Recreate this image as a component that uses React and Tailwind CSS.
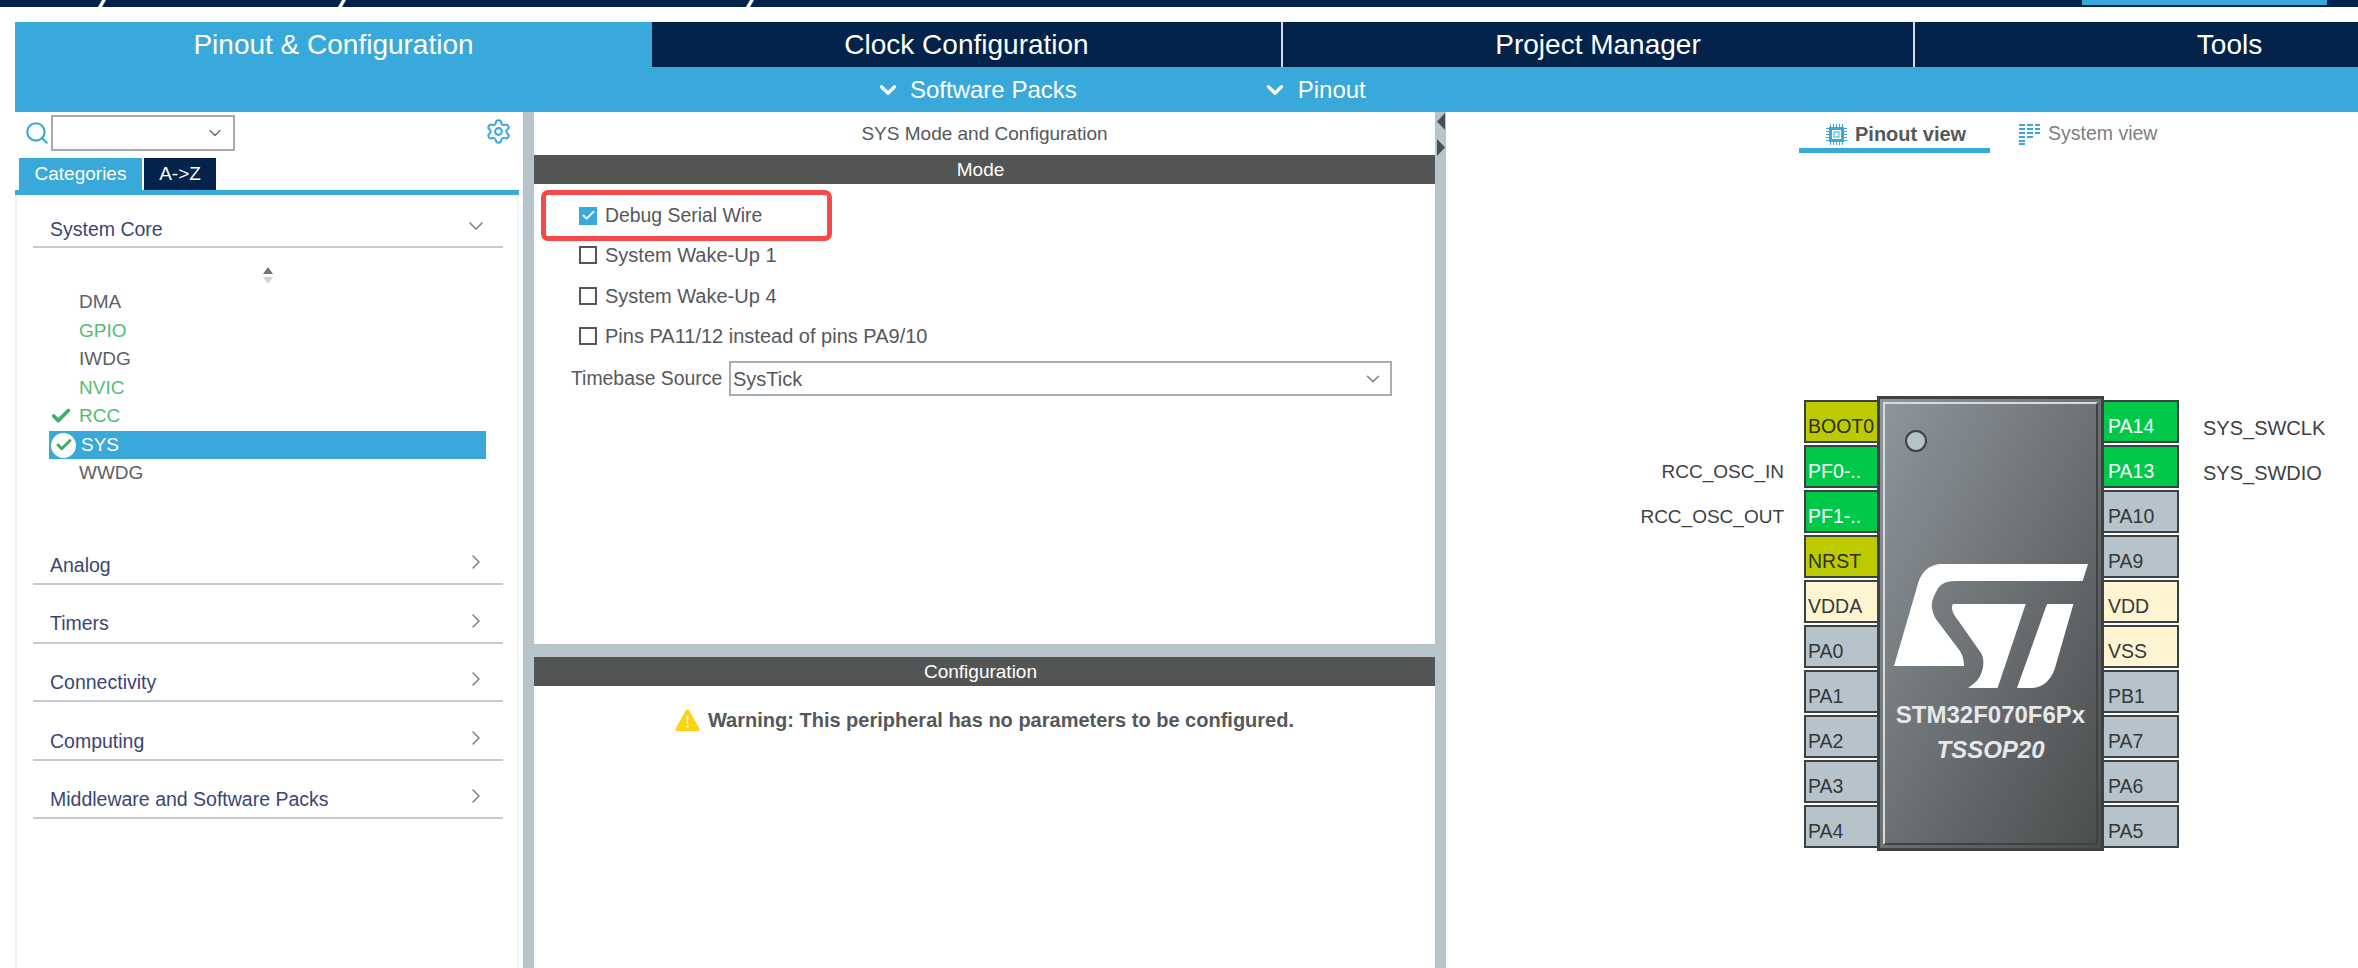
import { Check, ChevronDown, ChevronRight, Search, Settings } from "lucide-react";

const TABS = [
  { label: "Pinout & Configuration", width: "w-[637px]", active: true },
  { label: "Clock Configuration", width: "w-[631px] border-r-2 border-[#d5dbe0]" },
  { label: "Project Manager", width: "w-[632px] border-r-2 border-[#d5dbe0]" },
  { label: "Tools", width: "flex-1 pl-[186px]" },
];

const CORE_ITEMS = [
  { name: "DMA", color: "text-[#5c5f66]" },
  { name: "GPIO", color: "text-[#55bb72]" },
  { name: "IWDG", color: "text-[#5c5f66]" },
  { name: "NVIC", color: "text-[#55bb72]" },
  { name: "RCC", color: "text-[#55bb72]", mark: "check" },
  { name: "SYS", color: "text-white", mark: "selected" },
  { name: "WWDG", color: "text-[#5c5f66]" },
];

const CATEGORIES = ["Analog", "Timers", "Connectivity", "Computing", "Middleware and Software Packs"];

const PIN_STYLES = {
  lime: "bg-[#bccb00] text-[#2c2f10]",
  green: "bg-[#00c94a] text-white",
  power: "bg-[#fff5d3] text-[#35383a]",
  idle: "bg-[#b7c3ca] text-[#33383c]",
};

const LEFT_PINS = [
  { name: "BOOT0", kind: "lime" },
  { name: "PF0-..", kind: "green", label: "RCC_OSC_IN" },
  { name: "PF1-..", kind: "green", label: "RCC_OSC_OUT" },
  { name: "NRST", kind: "lime" },
  { name: "VDDA", kind: "power" },
  { name: "PA0", kind: "idle" },
  { name: "PA1", kind: "idle" },
  { name: "PA2", kind: "idle" },
  { name: "PA3", kind: "idle" },
  { name: "PA4", kind: "idle" },
];

const RIGHT_PINS = [
  { name: "PA14", kind: "green", label: "SYS_SWCLK" },
  { name: "PA13", kind: "green", label: "SYS_SWDIO" },
  { name: "PA10", kind: "idle" },
  { name: "PA9", kind: "idle" },
  { name: "VDD", kind: "power" },
  { name: "VSS", kind: "power" },
  { name: "PB1", kind: "idle" },
  { name: "PA7", kind: "idle" },
  { name: "PA6", kind: "idle" },
  { name: "PA5", kind: "idle" },
];

function Breadcrumbs() {
  return (
    <div className="flex h-[7px] bg-[#03234b]">
      <div className="w-[100px]" />
      <div className="h-full w-[4px] -skew-x-[30deg] bg-white" />
      <div className="w-[236px]" />
      <div className="h-full w-[4px] -skew-x-[30deg] bg-white" />
      <div className="w-[404px]" />
      <div className="h-full w-[4px] -skew-x-[30deg] bg-white" />
      <div className="w-[1330px]" />
      <div className="h-[5px] w-[245px] bg-[#39a9dc]" />
    </div>
  );
}

function MainTabs() {
  return (
    <div className="flex h-[45px]">
      {TABS.map((tab) => (
        <div
          key={tab.label}
          className={`${tab.width} flex items-center justify-center text-[28px] text-white ${
            tab.active ? "bg-[#39a9dc]" : "bg-[#03234b]"
          }`}
        >
          {tab.label}
        </div>
      ))}
    </div>
  );
}

function SubBar() {
  return (
    <div className="flex h-[45px] items-center bg-[#39a9dc] pl-[860px] text-[24px] text-white">
      <ChevronDown size={26} strokeWidth={3} />
      <span className="ml-[9px]">Software Packs</span>
      <ChevronDown size={26} strokeWidth={3} className="ml-[185px]" />
      <span className="ml-[10px]">Pinout</span>
    </div>
  );
}

function SortArrows() {
  return (
    <svg width="14" height="17" viewBox="0 0 14 17" className="mx-auto mt-[19px]">
      <path d="M7 0 L12 7 H2 Z" fill="#6f7479" />
      <path d="M7 17 L12 10 H2 Z" fill="#cfd3d6" />
    </svg>
  );
}

function ItemMark({ mark }) {
  if (mark === "check") {
    return <Check size={22} strokeWidth={4} className="absolute left-[33px] top-[3px] text-[#3fae6b]" />;
  }
  if (mark === "selected") {
    return (
      <span className="absolute left-[34px] top-[2px] flex h-[25px] w-[25px] items-center justify-center rounded-full bg-white">
        <Check size={18} strokeWidth={4} className="text-[#3fae6b]" />
      </span>
    );
  }
  return null;
}

function Sidebar() {
  return (
    <aside className="w-[508px] shrink-0">
      <div className="flex h-[46px] items-start pt-[3px]">
        <Search size={26} strokeWidth={2} className="ml-[9px] mt-[5px] text-[#39a9dc]" />
        <div className="ml-[1px] flex h-[36px] w-[184px] items-center justify-end border-2 border-[#a9a9a9] pr-[8px]">
          <ChevronDown size={20} strokeWidth={1.5} className="text-[#666]" />
        </div>
        <Settings size={27} strokeWidth={1.8} className="ml-[250px] mt-[3px] text-[#39a9dc]" />
      </div>
      <div className="flex h-[32px] pl-[4px] text-[19px]">
        <div className="flex w-[123px] items-center justify-center bg-[#39a9dc] text-white">Categories</div>
        <div className="ml-[2px] flex w-[72px] items-center justify-center bg-[#03234b] text-white">A-&gt;Z</div>
      </div>
      <div className="h-[5px] w-[504px] bg-[#39a9dc]" />
      <div className="h-[773px] w-[504px] border-x-2 border-[#f0f2f4] pl-[16px] pr-[14px]">
        <div className="flex h-[53px] items-end justify-between border-b-2 border-[#c3ccd2] pb-[2px] pl-[17px] pr-[15px] text-[19.5px] text-[#3a4674]">
          <span>System Core</span>
          <ChevronDown size={24} strokeWidth={1.4} className="mb-[6px] text-[#777]" />
        </div>
        <SortArrows />
        <ul className="mt-[4px] text-[19px]">
          {CORE_ITEMS.map((item) => (
            <li
              key={item.name}
              className={`relative -ml-[16px] flex h-[28.5px] items-center ${item.color}`}
            >
              <ItemMark mark={item.mark} />
              <span
                className={`flex h-full items-center ${
                  item.mark === "selected" ? "ml-[32px] w-[437px] bg-[#39a9dc] pl-[32px]" : "ml-[62px]"
                }`}
              >
                {item.name}
              </span>
            </li>
          ))}
        </ul>
        <div className="h-[39px]" />
        {CATEGORIES.map((name) => (
          <div
            key={name}
            className="flex h-[58.6px] items-end justify-between border-b-2 border-[#c3ccd2] pb-[3px] pl-[17px] pr-[15px] text-[19.5px] text-[#3a4674]"
          >
            <span>{name}</span>
            <ChevronRight size={24} strokeWidth={1.4} className="mb-[6px] text-[#777]" />
          </div>
        ))}
      </div>
    </aside>
  );
}

function CheckBox({ checked }) {
  if (checked) {
    return (
      <span className="flex h-[18px] w-[18px] items-center justify-center bg-[#39a9dc]">
        <Check size={15} strokeWidth={3} className="text-white" />
      </span>
    );
  }
  return <span className="h-[18px] w-[18px] border-2 border-[#555]" />;
}

function ModeOption({ label, className = "" }) {
  return (
    <div className={`ml-[45px] flex h-[28px] items-center gap-[8px] text-[20px] text-[#55585a] ${className}`}>
      <CheckBox />
      <span>{label}</span>
    </div>
  );
}

function SectionBar({ children }) {
  return (
    <div className="flex h-[29px] items-center justify-center bg-[#535554] pr-[8px] pt-[1px] text-[19px] text-white">
      {children}
    </div>
  );
}

function WarningIcon() {
  return (
    <svg width="25" height="22" viewBox="0 0 25 22">
      <path d="M12.5 0.5 C13.5 0.5 14 1 14.5 2 L24.4 19.5 C25 20.8 24.2 22 23 22 H2 C0.8 22 0 20.8 0.6 19.5 L10.5 2 C11 1 11.5 0.5 12.5 0.5 Z" fill="#fbd313" />
      <path d="M11.5 7 H13.5 L13.1 15 H11.9 Z M11.5 16.5 H13.5 V18.5 H11.5 Z" fill="#fff" />
    </svg>
  );
}

function ModePanel() {
  return (
    <section className="flex w-[901px] shrink-0 flex-col">
      <div className="flex h-[43px] items-center justify-center pt-[2px] text-[19px] text-[#55585a]">
        SYS Mode and Configuration
      </div>
      <SectionBar>Mode</SectionBar>
      <div className="h-[460px]">
        <div className="ml-[7px] mt-[6px] flex h-[51px] w-[291px] items-center gap-[8px] rounded-[7px] border-[5px] border-[#f44a4a] pl-[33px] text-[19.4px] text-[#55585a]">
          <CheckBox checked />
          <span>Debug Serial Wire</span>
        </div>
        <ModeOption label="System Wake-Up 1" />
        <ModeOption label="System Wake-Up 4" className="mt-[13px]" />
        <ModeOption label="Pins PA11/12 instead of pins PA9/10" className="mt-[12px]" />
        <div className="mt-[11px] flex h-[35px] items-center text-[19.4px] text-[#55585a]">
          <span className="ml-[37px] w-[158px]">Timebase Source</span>
          <div className="flex h-full w-[663px] items-center justify-between border-2 border-[#a9adb0] pl-[2px] pr-[6px] text-[20px]">
            <span>SysTick</span>
            <ChevronDown size={22} strokeWidth={1.4} className="text-[#777]" />
          </div>
        </div>
      </div>
      <div className="h-[13px] bg-[#b8c4cb]" />
      <SectionBar>Configuration</SectionBar>
      <div className="mt-[19px] flex items-center justify-center gap-[8px] text-[20px] font-bold text-[#55585a]">
        <WarningIcon />
        <span>Warning: This peripheral has no parameters to be configured.</span>
      </div>
    </section>
  );
}

function Splitter({ arrows }) {
  return (
    <div className="flex w-[11px] shrink-0 flex-col bg-[#b8c4cb] pt-[1px]">
      {arrows && (
        <svg width="11" height="43" viewBox="0 0 11 43">
          <path d="M10 0 V17 L2 8.5 Z M2 26 V43 L10 34.5 Z" fill="#4b4e50" />
        </svg>
      )}
    </div>
  );
}

function ChipIcon() {
  return (
    <svg width="21" height="21" viewBox="0 0 21 21" fill="#39a9dc">
      <path d="M3 3 H18 V18 H3 Z M6 6 V15 H15 V6 Z" fillRule="evenodd" />
      <path d="M7.5 7.5 H13.5 V13.5 H7.5 Z M8.5 8.5 V12.5 H12.5 V8.5 Z" fillRule="evenodd" />
      <path d="M4 0 h1 v3 h-1 Z M7 0 h1 v3 h-1 Z M10 0 h1 v3 h-1 Z M13 0 h1 v3 h-1 Z M16 0 h1 v3 h-1 Z" />
      <path d="M4 18 h1 v3 h-1 Z M7 18 h1 v3 h-1 Z M10 18 h1 v3 h-1 Z M13 18 h1 v3 h-1 Z M16 18 h1 v3 h-1 Z" />
      <path d="M0 4 h3 v1 h-3 Z M0 7 h3 v1 h-3 Z M0 10 h3 v1 h-3 Z M0 13 h3 v1 h-3 Z M0 16 h3 v1 h-3 Z" />
      <path d="M18 4 h3 v1 h-3 Z M18 7 h3 v1 h-3 Z M18 10 h3 v1 h-3 Z M18 13 h3 v1 h-3 Z M18 16 h3 v1 h-3 Z" />
    </svg>
  );
}

function SystemIcon() {
  return (
    <svg width="21" height="21" viewBox="0 0 21 21" fill="#39a9dc">
      <path d="M0 0 h6 v2 h-6 Z M0 4 h6 v2 h-6 Z M0 8 h6 v2 h-6 Z M0 12 h6 v2 h-6 Z M0 16 h6 v2 h-6 Z M0 19 h6 v2 h-6 Z" />
      <path d="M8 0 h6 v2 h-6 Z M8 4 h6 v2 h-6 Z M8 8 h6 v2 h-6 Z M8 12 h6 v2 h-6 Z" />
      <path d="M16 0 h5 v2 h-5 Z M16 4 h5 v2 h-5 Z M16 8 h5 v2 h-5 Z" />
    </svg>
  );
}

function StLogo() {
  return (
    <svg width="195" height="125" viewBox="0 0 195 125" fill="#fff">
      <path d="M195 1 L189.6 18 H62 C52 18 46 22 43.6 28 C40 34 38 40 39 45 C40 50 41 53 43.6 57 L67 88 C70 93 71 98 71 103 H1 L24 24 C27 10 36 1 48 1 Z" />
      <path d="M60 41 H132.7 L104.6 125 H75 C82 120 87 116 89 108 C91 102 91 95 88 90 L62 53 C59 48 58 44 60 41 Z" />
      <path d="M154 41 H180.4 L162 105 C158 117 150 125 138 125 H124 Z" />
    </svg>
  );
}

function Pin({ pin, side }) {
  return (
    <div
      className={`flex h-[43px] items-center border-y-2 border-[#3b4042] pt-[11px] text-[19.5px] ${PIN_STYLES[pin.kind]} ${
        side === "left" ? "w-[73px] border-l-2 pl-[2px]" : "w-[75px] border-r-2 pl-[4px]"
      }`}
    >
      {pin.name}
    </div>
  );
}

function PinLabels({ pins, className }) {
  return (
    <div className={`mt-[4px] flex flex-col text-[#3d4144] ${className}`}>
      {pins.map((pin) => (
        <div key={pin.name} className="flex h-[45px] items-center pt-[10px]">
          {pin.label}
        </div>
      ))}
    </div>
  );
}

function PinColumn({ pins, side }) {
  return (
    <div className="mt-[4px] flex flex-col gap-[2px]">
      {pins.map((pin) => (
        <Pin key={pin.name} pin={pin} side={side} />
      ))}
    </div>
  );
}

function Chip() {
  return (
    <div className="h-[455px] w-[227px] border-[3px] border-[#3f4243] bg-linear-to-br from-[#8f979d] to-[#4b4d4d] p-[3px]">
      <div className="flex h-full flex-col items-center border-2 border-t-[#d7dbde] border-r-[#3f4243] border-b-[#3f4243] border-l-[#d7dbde]">
        <div className="mt-[26px] h-[22px] w-[22px] -translate-x-[75px] rounded-full border-2 border-[#3f4243] bg-[#b7c3ca]" />
        <div className="mt-[111px]">
          <StLogo />
        </div>
        <div className="mt-[13px] text-[24px] font-bold leading-[28px] text-[#e6e8ea]">STM32F070F6Px</div>
        <div className="mt-[7px] text-[24px] font-bold italic leading-[28px] text-[#e6e8ea]">TSSOP20</div>
      </div>
    </div>
  );
}

function PinoutView() {
  return (
    <section className="flex-1">
      <div className="ml-[353px] flex h-[41px] text-[19.5px]">
        <div className="flex h-full w-[191px] items-center gap-[8px] border-b-[5px] border-[#39a9dc] pl-[27px] pt-[8px] text-[20px] font-bold text-[#55585a]">
          <ChipIcon />
          <span>Pinout view</span>
        </div>
        <div className="ml-[29px] flex h-[36px] items-center gap-[8px] pt-[8px] text-[#7d8083]">
          <SystemIcon />
          <span>System view</span>
        </div>
      </div>
      <div className="mt-[243px] flex items-start">
        <PinLabels pins={LEFT_PINS} className="w-[338px] items-end text-[19px]" />
        <div className="w-[20px]" />
        <PinColumn pins={LEFT_PINS} side="left" />
        <Chip />
        <PinColumn pins={RIGHT_PINS} side="right" />
        <PinLabels pins={RIGHT_PINS} className="ml-[24px] text-[20px]" />
      </div>
    </section>
  );
}

export default function App() {
  return (
    <div className="h-[968px] w-[2358px] overflow-hidden bg-white font-['Liberation_Sans',Arial,sans-serif]">
      <Breadcrumbs />
      <div className="pl-[15px] pt-[15px]">
        <MainTabs />
        <SubBar />
        <div className="flex h-[856px]">
          <Sidebar />
          <Splitter />
          <ModePanel />
          <Splitter arrows />
          <PinoutView />
        </div>
      </div>
    </div>
  );
}
